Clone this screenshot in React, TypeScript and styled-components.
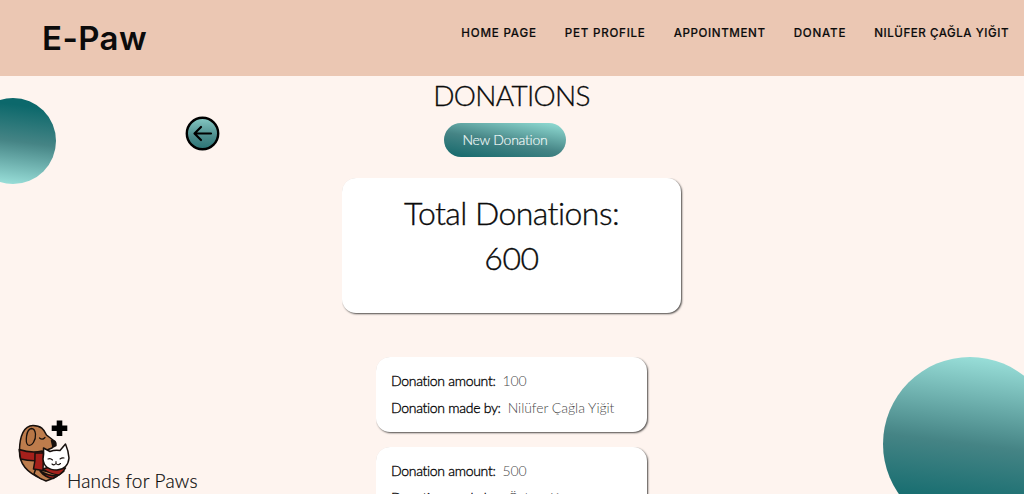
import React from 'react';
import styled, { createGlobalStyle } from 'styled-components';

const GlobalStyle = createGlobalStyle`
  * { box-sizing: border-box; }
  html, body { margin: 0; height: 100%; overflow: hidden; }
  body {
    background: #fef4ef;
    color: #0b0b0b;
    font-family: Lato, sans-serif;
    font-weight: 300;
    font-variant-ligatures: none;
  }
  #root { height: 100%; }
`;

const Page = styled.div`
  position: relative;
  height: 494px;
  overflow: hidden;
  display: flex;
  flex-direction: column;
`;

const Header = styled.header`
  flex: none;
  height: 76px;
  padding: 0 15px 0 42px;
  display: flex;
  justify-content: space-between;
  background: #ebc7b3;
  font-family: Inter, sans-serif;
`;

const Brand = styled.div`
  margin-top: 18px;
  font-size: 33px;
  line-height: 40px;
  font-weight: 600;
  letter-spacing: 0.4px;
`;

const Nav = styled.nav`
  display: flex;
  gap: 28px;
  margin-top: 25px;
`;

const NavLink = styled.a<{ $track: number }>`
  font-size: 11.6px;
  line-height: 16px;
  font-weight: 500;
  -webkit-text-stroke: 0.15px currentColor;
  white-space: nowrap;
  letter-spacing: ${p => p.$track}px;
`;

const Circle = styled.div<{ $size: number; $x: number; $y: number; $flip?: boolean }>`
  position: absolute;
  left: ${p => p.$x}px;
  top: ${p => p.$y}px;
  width: ${p => p.$size}px;
  height: ${p => p.$size}px;
  border-radius: 50%;
  background: linear-gradient(187deg, #9ae0da 4%, #458485 50%, #0c686b 88%);
  transform: ${p => (p.$flip ? 'rotate(180deg)' : 'none')};
`;

const BackButton = styled.button`
  position: absolute;
  left: 185px;
  top: 116px;
  width: 35px;
  height: 35px;
  padding: 0;
  border: 0;
  background: none;
  svg { display: block; }
`;

const Main = styled.main`
  display: flex;
  flex-direction: column;
  align-items: center;
  padding-right: 1px;
`;

const Title = styled.h1`
  margin: 2px 0 0;
  font-size: 28px;
  line-height: 34px;
  font-weight: 300;
  letter-spacing: -0.7px;
  -webkit-text-stroke: 0.3px currentColor;
`;

const NewButton = styled.button`
  width: 122px;
  height: 34px;
  margin: 11px 13px 0 0;
  padding: 0 0 2px;
  border: 0;
  border-radius: 17px;
  background: linear-gradient(190deg, #8ed9d1 4%, #458485 55%, #15696c 98%);
  color: #f4fbfa;
  font: 300 14px Lato, sans-serif;
  font-variant-ligatures: none;
  letter-spacing: -0.25px;
  -webkit-text-stroke: 0.15px currentColor;
`;

const Card = styled.section`
  background: #fff;
  box-shadow: 1px 1px 2px rgba(0, 0, 0, 0.7);
  clip-path: inset(0 -5px -5px 0 round 14px);
`;

const TotalCard = styled(Card)`
  width: 339px;
  height: 135px;
  margin-top: 21px;
  padding-top: 12px;
  border-radius: 14px;
  text-align: center;
  font-size: 32px;
  line-height: 45px;
  font-weight: 300;
  -webkit-text-stroke: 0.35px currentColor;
`;

const TotalLine = styled.div<{ $track: number }>`
  letter-spacing: ${p => p.$track}px;
`;

const List = styled.div`
  display: flex;
  flex-direction: column;
  gap: 15px;
  margin-top: 44px;
`;

const DonationCard = styled(Card)`
  width: 271px;
  height: 75px;
  padding: 10px 15px;
  border-radius: 14px;
  font-size: 14px;
  line-height: 27px;
`;

const Row = styled.div`
  display: flex;
  gap: 7px;
  white-space: nowrap;
`;

const Label = styled.span`
  letter-spacing: -0.3px;
  -webkit-text-stroke: 0.35px currentColor;
`;

const Value = styled.span`
  color: #4a4a4a;
  letter-spacing: -0.05px;
`;

const Footer = styled.footer`
  position: absolute;
  left: 16px;
  bottom: 0;
  display: flex;
  align-items: flex-end;
  svg { display: block; margin-bottom: 10px; }
`;

const Slogan = styled.span`
  margin: 0 0 1px -4px;
  font-size: 19px;
  line-height: 24px;
  letter-spacing: 0.2px;
  -webkit-text-stroke: 0.2px currentColor;
`;

const links: [string, number][] = [
  ['HOME PAGE', 0.82],
  ['PET PROFILE', 0.76],
  ['APPOINTMENT', 0.6],
  ['DONATE', 0.8],
  ['NILÜFER ÇAĞLA YIĞIT', 0.53],
];

const donations = [
  { amount: '100', by: 'Nilüfer Çağla Yiğit' },
  { amount: '500', by: 'Özlem K' },
];

const Logo = () => (
  <svg width="55" height="66" viewBox="0 0 55 66" fill="none" stroke="#17100d" strokeWidth="1.5" strokeLinejoin="round" strokeLinecap="round">
    <path d="M40.7 2.5h5.6v5h5v5.4h-5v5h-5.6v-5h-5V7.5h5z" fill="#000" stroke="none" />
    {/* dog */}
    <path d="M3.500 33C3.500 18 8 7.500 17 7.500c8 0 11 4 13.500 9.500l6.500 5c2 2 1 5-1 8l-10 4v27C14 56 3 48 3.500 33z" fill="#bd7c4c" />
    <path d="M15.500 10.500C10 11 9 25 12 27c4 2 8-5 7.500-11-.5-4-2-5.500-4-5.500z" fill="#b87646" strokeWidth="1.300" />
    <path d="M23.500 20q3 2.500 5.500-.5" strokeWidth="1.200" />
    <path d="M35.500 22.500q5-.5 4.500 5l-3 1.500z" fill="#17100d" />
    {/* lower body and scarf */}
    <path d="M20 50q13 6 28 3-6 6-18 10-6-2-12-7z" fill="#bd7c4c" />
    <path d="M27 51l6-2q8 3 16.500 1-2 4-6.500 7-9-1-16-6z" fill="#a5201b" />
    <path d="M24 53q8 5 17 5l-4 2.500q-8-1-13-7.500z" fill="#a5201b" />
    <path d="M3.200 31.500q12 4 23 1.500l1.500 9q-12 2-23-1z" fill="#a5201b" />
    <path d="M19 35h8.500L27 52.500l-9.500-1.500q2-8 1.500-16z" fill="#a5201b" />
    {/* cat */}
    <path d="M27.500 30l6.500 3.500q5-2 10-1l5.500-6.500q3 7 3.500 14-1 11-12 12-13 0-14-11 1-5 .5-11z" fill="#fff" />
    <path d="M32 41q2.500-1 4.500 1M44 41q2-1.500 4-1M40 43.500v2q-2 2.500-4 .5M40 45.500q2 2.500 4.500 0" strokeWidth="1.100" />
  </svg>
);

export default function App() {
  return (
    <Page>
      <GlobalStyle />
      <Header>
        <Brand>E-Paw</Brand>
        <Nav>{links.map(([t, k]) => <NavLink key={t} $track={k}>{t}</NavLink>)}</Nav>
      </Header>
      <Circle $size={86} $x={-30} $y={98} $flip />
      <Circle $size={174} $x={883} $y={357} />
      <BackButton aria-label="Back">
        <svg width="35" height="35" viewBox="0 0 35 35" fill="none" stroke="#000">
          <defs>
            <linearGradient id="back" x1="0" y1="0" x2="0" y2="1">
              <stop offset="0" stopColor="#86c9c4" />
              <stop offset="0.6" stopColor="#4b8b8b" />
              <stop offset="1" stopColor="#2a7476" />
            </linearGradient>
          </defs>
          <circle cx="17.5" cy="17.5" r="15.700" fill="url(#back)" strokeWidth="2.400" />
          <path d="M26 17.500H10M16 11l-6.500 6.500L16 24" strokeWidth="2.200" strokeLinecap="round" strokeLinejoin="round" />
        </svg>
      </BackButton>
      <Main>
        <Title>DONATIONS</Title>
        <NewButton>New Donation</NewButton>
        <TotalCard>
          <TotalLine $track={-0.55}>Total Donations:</TotalLine>
          <TotalLine $track={-0.4}>600</TotalLine>
        </TotalCard>
        <List>
          {donations.map(d => (
            <DonationCard key={d.amount}>
              <Row><Label>Donation amount:</Label><Value>{d.amount}</Value></Row>
              <Row><Label>Donation made by:</Label><Value>{d.by}</Value></Row>
            </DonationCard>
          ))}
        </List>
      </Main>
      <Footer>
        <Logo />
        <Slogan>Hands for Paws</Slogan>
      </Footer>
    </Page>
  );
}
